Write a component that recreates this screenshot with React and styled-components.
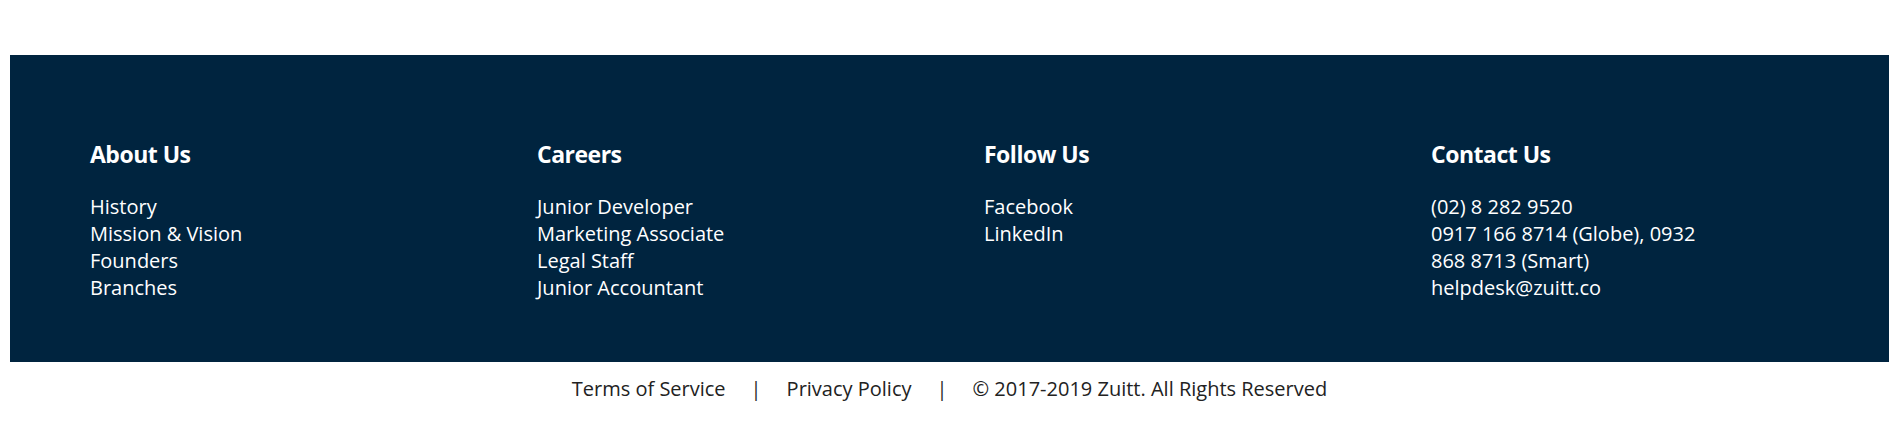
import React from "react";
import styled, { createGlobalStyle } from "styled-components";

const GlobalStyle = createGlobalStyle`
  html, body {
    margin: 0;
    padding: 0;
    background-color: #fff;
  }

  body {
    font-family: "Open Sans", "Noto Sans", sans-serif;
  }
`;

const Page = styled.div`
  padding: 55px 9px 0 10px;
`;

const Footer = styled.footer`
  background-color: #00243f;
  color: #fff;
  display: grid;
  grid-template-columns: repeat(4, 447px);
  height: 307px;
  box-sizing: border-box;
  padding: 85px 0 0 80px;
`;

const Column = styled.div`
  max-width: 290px;
`;

const Heading = styled.h3`
  font-size: 23px;
  font-weight: 700;
  line-height: 29px;
  letter-spacing: -0.5px;
  margin: 0 0 24px;
`;

const List = styled.ul`
  list-style: none;
  margin: 0;
  padding: 0;
`;

const Item = styled.li`
  font-size: 20px;
  line-height: 27px;
`;

const BottomBar = styled.div`
  display: flex;
  justify-content: center;
  align-items: center;
  color: #222;
  font-size: 20px;
  line-height: 26px;
  padding-top: 14px;
`;

const Separator = styled.span`
  margin: 0 25px;
  color: #2a2a2a;
`;

const columns = [
  {
    title: "About Us",
    items: ["History", "Mission & Vision", "Founders", "Branches"]
  },
  {
    title: "Careers",
    items: [
      "Junior Developer",
      "Marketing Associate",
      "Legal Staff",
      "Junior Accountant"
    ]
  },
  {
    title: "Follow Us",
    items: ["Facebook", "LinkedIn"]
  },
  {
    title: "Contact Us",
    items: [
      "(02) 8 282 9520",
      "0917 166 8714 (Globe), 0932 868 8713 (Smart)",
      "helpdesk@zuitt.co"
    ]
  }
];

export default function App() {
  return (
    <Page>
      <GlobalStyle />

      <Footer>
        {columns.map(column => (
          <Column key={column.title}>
            <Heading>{column.title}</Heading>
            <List>
              {column.items.map(item => (
                <Item key={item}>{item}</Item>
              ))}
            </List>
          </Column>
        ))}
      </Footer>

      <BottomBar>
        <span>Terms of Service</span>
        <Separator>|</Separator>
        <span>Privacy Policy</span>
        <Separator>|</Separator>
        <span>© 2017-2019 Zuitt. All Rights Reserved</span>
      </BottomBar>
    </Page>
  );
}
